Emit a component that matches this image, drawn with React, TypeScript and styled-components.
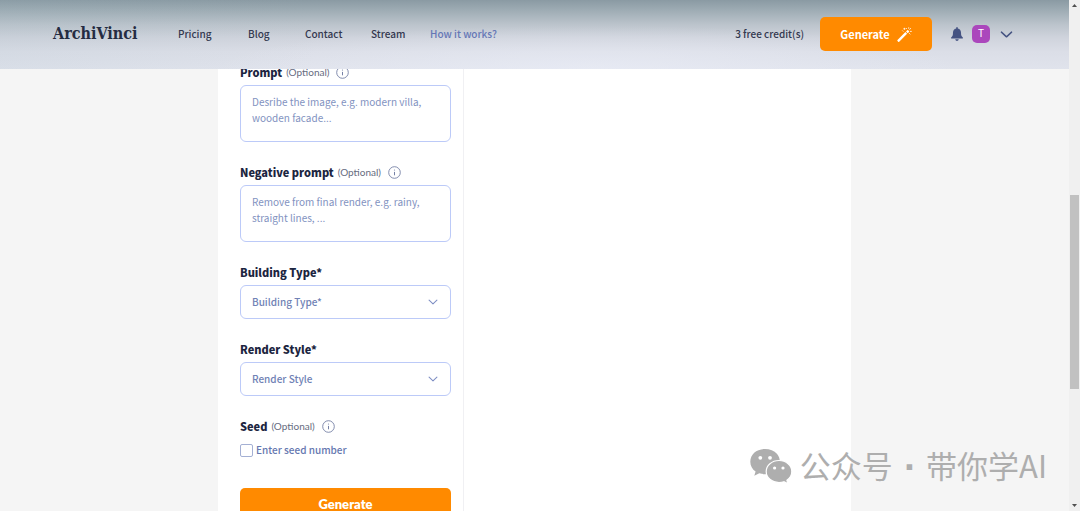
import React from "react";
import styled, { createGlobalStyle } from "styled-components";

const GlobalStyle = createGlobalStyle`
  *, *::before, *::after { box-sizing: border-box; }
  body {
    margin: 0;
    background: #f5f5f5;
    color: #1f2a44;
    font-family: "Noto Sans CJK SC", sans-serif;
    font-size: 10px;
    line-height: 16px;
    overflow: hidden;
  }
  button, input, textarea, select { font: inherit; }
`;

const Viewport = styled.div`
  position: relative;
  display: flex;
  height: 100vh;
  overflow: hidden;
`;

const Page = styled.div`
  position: relative;
  flex: 1;
  min-width: 0;
`;

const Header = styled.header`
  position: absolute;
  inset: 0 0 auto;
  z-index: 2;
  display: flex;
  align-items: center;
  height: 69px;
  padding: 0 56px 1px 53px;
  background:
    radial-gradient(ellipse at 55% 100%, rgba(235, 238, 248, 0.6), rgba(235, 238, 248, 0) 45%),
    linear-gradient(90deg, rgba(150, 180, 190, 0.1), rgba(150, 180, 190, 0) 30%),
    linear-gradient(#8a9aa3 0, #9dabb3 14%, #bcc4cc 36%, #cfd3dc 54%, #dbdee7 75%, #e0e3ec 100%);
`;

const Logo = styled.a`
  width: 125px;
  color: #252c42;
  font: bold 16px/20px "DejaVu Serif Condensed", "DejaVu Serif", serif;
  text-decoration: none;
`;

const Nav = styled.nav`
  display: flex;
  flex: 1;
`;

const NavLink = styled.a<{ $width: number; $accent?: boolean }>`
  width: ${(p) => p.$width}px;
  color: ${(p) => (p.$accent ? "#6577b6" : "#33384f")};
  font-weight: 500;
  text-decoration: none;
  white-space: nowrap;
`;

const Credits = styled.span`
  margin-right: 16px;
  color: #33384f;
  font-weight: 500;
`;

const PrimaryButton = styled.button`
  display: flex;
  flex-shrink: 0;
  align-items: center;
  justify-content: center;
  gap: 7px;
  height: 34px;
  border: 0;
  border-radius: 5px;
  background: #ff8a00;
  color: #fff;
`;

const HeaderGenerate = styled(PrimaryButton)`
  width: 112px;
  margin-right: 19px;
  font-size: 11px;
  font-weight: 700;
`;

const SubmitButton = styled(PrimaryButton)`
  width: 100%;
  height: 32px;
  font-family: Lato, sans-serif;
  font-size: 13px;
  font-weight: 800;
  line-height: 14px;
`;

const IconButton = styled.button`
  display: flex;
  padding: 0;
  border: 0;
  background: none;
  color: #455382;
`;

const Avatar = styled.span`
  display: grid;
  place-items: center;
  width: 18px;
  height: 18px;
  margin: 0 10px 0 9px;
  border-radius: 5px;
  background: #ab47bc;
  color: #fff;
  font: 10px/18px Roboto, sans-serif;
`;

const Panel = styled.main`
  display: flex;
  width: 59%;
  min-width: 633px;
  max-width: 1200px;
  height: 100%;
  margin: 0 auto;
  background: #fff;
`;

const Form = styled.form`
  display: flex;
  flex-direction: column;
  gap: 21px;
  width: 246px;
  padding: 63px 12px 0 22px;
  border-right: 1px solid #f0f0f3;
`;

const Field = styled.div`
  display: flex;
  flex-direction: column;
  gap: 4px;
`;

const LabelRow = styled.div`
  display: flex;
  align-items: center;
  height: 18px;
`;

const Label = styled.label`
  color: #1c2540;
  font-size: 11px;
  font-weight: 900;
`;

const Optional = styled.span`
  margin: 0 7px 0 4px;
  color: #666c80;
  font: 400 10px/16px Lato, sans-serif;
`;

const TextArea = styled.textarea`
  display: block;
  height: 57px;
  padding: 8px 11px;
  border: 1px solid #bccaf8;
  border-radius: 6px;
  outline: 0;
  background: #fff;
  resize: none;
  overflow: hidden;
  &::placeholder { color: #8292bf; opacity: 1; }
`;

const SelectWrap = styled.div`
  display: grid;
  align-items: center;
  > * { grid-area: 1 / 1; }
  > svg { justify-self: end; margin-right: 13px; pointer-events: none; }
`;

const Select = styled.select`
  appearance: none;
  width: 100%;
  height: 34px;
  padding: 0 11px;
  border: 1px solid #bccaf8;
  border-radius: 6px;
  background: #fff;
  color: #7082b5;
  font-weight: 500;
`;

const CheckRow = styled.label`
  display: flex;
  align-items: center;
  gap: 3px;
  height: 22px;
  margin-bottom: 6px;
  color: #6577b0;
  font-weight: 500;
`;

const Checkbox = styled.input`
  appearance: none;
  width: 13px;
  height: 13px;
  margin: 0;
  border: 1px solid #a4b0d4;
  border-radius: 2px;
  background: #fff;
`;

const ScrollTrack = styled.div`
  display: grid;
  grid-template-rows: 4px 1fr 4px;
  justify-items: center;
  width: 11px;
  padding: 3px 0;
  background: #f0f0f0;
`;

const ScrollRail = styled.div`
  display: grid;
  grid-template-rows: 188fr 194fr 115fr;
`;

const ScrollThumb = styled.div`
  grid-row: 2;
  width: 9px;
  background: #c1c1c1;
`;

const Watermark = styled.div`
  position: absolute;
  right: 33px;
  bottom: 24px;
  z-index: 3;
  display: flex;
  align-items: center;
  gap: 8px;
  color: #aeaeae;
  font-size: 31px;
  line-height: 40px;
  font-weight: 400;
  white-space: nowrap;
  pointer-events: none;
`;

const Separator = styled.span`
  font-family: "DejaVu Sans", sans-serif;
  font-weight: 700;
`;

const Chevron = ({ size, color }: { size: number; color: string }) => (
  <svg width={size} height={size} viewBox="0 0 12 12" fill="none" stroke={color} strokeWidth="1.3" strokeLinecap="round" strokeLinejoin="round">
    <path d="M1.3 3.8 6 8.2l4.7-4.4" />
  </svg>
);

const Info = () => (
  <svg width="13" height="13" viewBox="0 0 13 13" fill="none" stroke="#7580a5">
    <circle cx="6.5" cy="6.5" r="5.8" strokeWidth=".9" />
    <path d="M6.5 5.9v3.4" />
    <circle cx="6.5" cy="4" r=".6" fill="#7580a5" stroke="none" />
  </svg>
);

const Wand = () => (
  <svg width="15" height="15" viewBox="0 0 15 15" fill="#fff">
    <path d="M.5 13 8.4 5.1l1.7 1.7-7.9 7.9q-.5.4-1 0l-.7-.7q-.4-.5 0-1ZM9 4.5l1.3-1.3q.4-.4.8 0l.9.9q.4.4 0 .8l-1.3 1.3Z" />
    <path d="M7.4.8v2M6.4 1.8h2M11.7.3v1.5M5.3 3.5l1 1M12.4 2.7 14 1.1M13 4.4h1.8M12.1 6.1l1.2 1.3M9.1 1l.6 1" fill="none" stroke="#fff" strokeWidth=".8" />
  </svg>
);

const Bell = () => (
  <svg width="12" height="14" viewBox="0 0 12 14" fill="#455382">
    <path d="M6 0q.8 0 .8.9v.5C9 1.8 10 3.5 10 5.4c0 3 .6 3.8 1.6 4.8.7.7.3 1.4-.5 1.4H.9c-.8 0-1.2-.7-.5-1.4C1.4 9.200 2 8.400 2 5.400c0-1.900 1-3.600 3.200-4V.9Q5.200 0 6 0ZM4.300 12.300h3.400C7.500 14.500 4.500 14.500 4.300 12.300Z" />
  </svg>
);

const WeChat = () => (
  <svg width="42" height="34" viewBox="0 0 42 34">
    <path d="M15 0C6.700 0 .3 5.400.3 12.700c0 4 2 7.500 5.300 9.900L4.300 26.700l5-2.500c6 2 12 .6 15.800-2.500 5.800-4.700 6-11.700 2-16.700C24.200 1.700 19.800 0 15 0Z" fill="#aeaeae" />
    <path d="M29 11.500c-7.200 0-12.800 4.900-12.800 11s5.600 11 12.800 11q2.600 0 4.900-.8l4 2-1-3.400c3-2 4.900-5.200 4.900-8.800 0-6.100-5.600-11-12.800-11Z" fill="#aeaeae" stroke="#fff" strokeWidth="1.200" />
    <g fill="#fff"><circle cx="10.300" cy="8.800" r="1.900" /><circle cx="20" cy="8.800" r="1.900" /><circle cx="24.600" cy="19" r="1.600" /><circle cx="33" cy="19" r="1.600" /></g>
  </svg>
);

const TextField = ({ id, label, placeholder }: { id: string; label: string; placeholder: string }) => (
  <Field>
    <LabelRow><Label htmlFor={id}>{label}</Label><Optional>(Optional)</Optional><Info /></LabelRow>
    <TextArea id={id} placeholder={placeholder} />
  </Field>
);

const SelectField = ({ id, label, option }: { id: string; label: string; option: string }) => (
  <Field>
    <LabelRow><Label htmlFor={id}>{label}</Label></LabelRow>
    <SelectWrap>
      <Select id={id}><option>{option}</option></Select>
      <Chevron size={10} color="#7f8fc4" />
    </SelectWrap>
  </Field>
);

export default function App() {
  return (
    <Viewport>
      <GlobalStyle />
      <Page>
        <Header>
          <Logo href="#">ArchiVinci</Logo>
          <Nav>
            <NavLink href="#" $width={70}>Pricing</NavLink>
            <NavLink href="#" $width={57}>Blog</NavLink>
            <NavLink href="#" $width={66}>Contact</NavLink>
            <NavLink href="#" $width={59}>Stream</NavLink>
            <NavLink href="#" $width={70} $accent>How it works?</NavLink>
          </Nav>
          <Credits>3 free credit(s)</Credits>
          <HeaderGenerate type="button">Generate <Wand /></HeaderGenerate>
          <IconButton type="button" aria-label="Notifications"><Bell /></IconButton>
          <Avatar>T</Avatar>
          <IconButton type="button" aria-label="Account menu"><Chevron size={13} color="#455382" /></IconButton>
        </Header>
        <Panel>
          <Form>
            <TextField id="prompt" label="Prompt" placeholder="Desribe the image, e.g. modern villa, wooden facade..." />
            <TextField id="negative" label="Negative prompt" placeholder="Remove from final render, e.g. rainy, straight lines, ..." />
            <SelectField id="building" label="Building Type*" option="Building Type*" />
            <SelectField id="style" label="Render Style*" option="Render Style" />
            <Field>
              <LabelRow><Label htmlFor="seed">Seed</Label><Optional>(Optional)</Optional><Info /></LabelRow>
              <CheckRow><Checkbox id="seed" type="checkbox" />Enter seed number</CheckRow>
            </Field>
            <SubmitButton type="button">Generate</SubmitButton>
          </Form>
        </Panel>
      </Page>
      <ScrollTrack aria-hidden="true">
        <svg width="5" height="4" viewBox="0 0 5 4"><path d="M0 4 2.500 1 5 4Z" fill="#505050" /></svg>
        <ScrollRail><ScrollThumb /></ScrollRail>
        <svg width="5" height="4" viewBox="0 0 5 4"><path d="M0 0h5L2.500 3Z" fill="#505050" /></svg>
      </ScrollTrack>
      <Watermark>
        <WeChat />
        <span>公众号<Separator> · </Separator>带你学AI</span>
      </Watermark>
    </Viewport>
  );
}
